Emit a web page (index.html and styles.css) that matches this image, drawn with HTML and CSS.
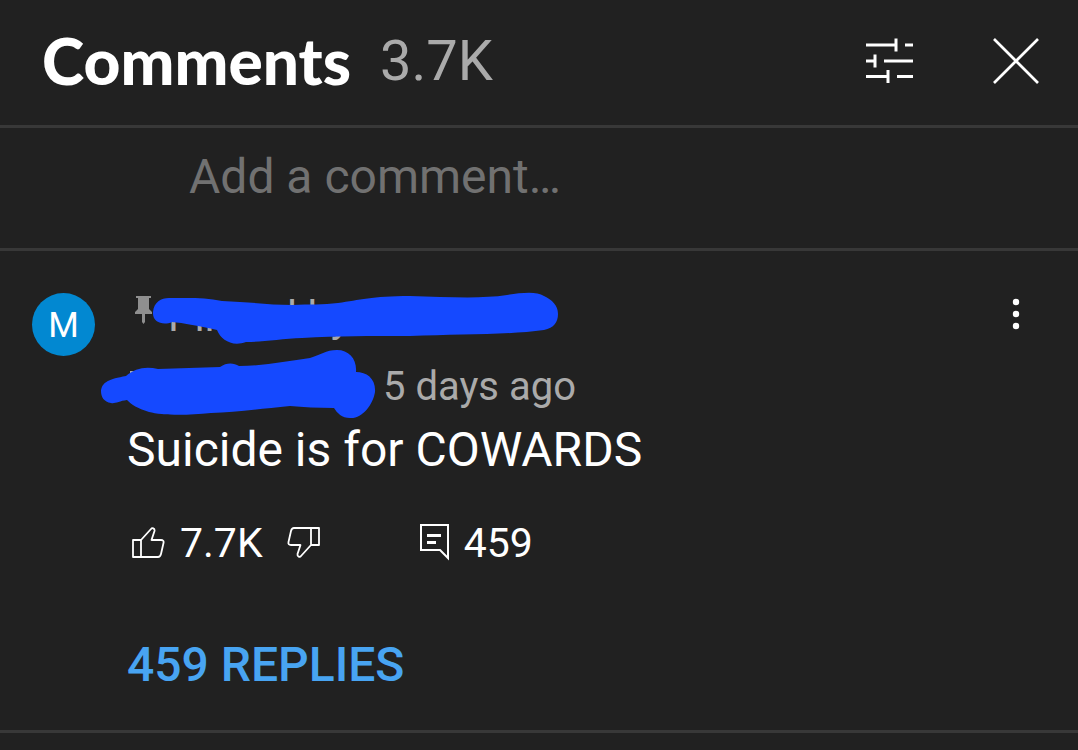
FILE: index.html
```html
<!DOCTYPE html>
<html lang="en">
<head>
	<meta charset="UTF-8">
	<title>Comments</title>
	<link rel="stylesheet" href="styles.css">
</head>
<body>
	<div class="header">
		<h1 class="title">Comments</h1>
		<span class="total">3.7K</span>
		<button class="icon-btn sort" type="button" aria-label="Sort comments">
			<svg width="48" height="46" viewBox="0 0 48 46" fill="none" stroke="#fff" stroke-width="3">
				<path d="M0 7H30M30 0.500V13.500M39 7H47M0 23H9M9 16.500V29.500M18 23H47M0 38.500H22M22 32V45M31 38.500H47"/>
			</svg>
		</button>
		<button class="icon-btn" type="button" aria-label="Close">
			<svg width="46" height="46" viewBox="0 0 46 46" fill="none" stroke="#fff" stroke-width="2.700">
				<path d="M1 1L45 45M45 1L1 45"/>
			</svg>
		</button>
	</div>

	<div class="add">
		<input class="add-input" type="text" placeholder="Add a comment…" aria-label="Add a comment">
	</div>

	<div class="comment">
		<div class="avatar">M</div>
		<div class="content">
			<div class="pinned">
				<svg width="17" height="28" viewBox="0 0 17 28" fill="#8f8f8f">
					<path d="M1 0H16V2H14V13L17 16V18H10V26L8.500 28L7 26V18H0V16L3 13V2H1Z"/>
				</svg>
				<span>Pinned by</span>
			</div>
			<div class="time">5 days ago</div>
			<p class="text">Suicide is for COWARDS</p>
			<div class="actions">
				<button class="action like" type="button" aria-label="Like">
					<svg width="33" height="33" viewBox="0 0 33 33" fill="none" stroke="#fff" stroke-width="1.800" stroke-linejoin="round">
						<path d="M1 13H9V30H1ZM9 13L19 2C20 0.500 23 1 22.500 4L19.500 13H29C31 13 32 14 31.500 16L29 27C28.500 29 27.500 30 26 30H9"/>
					</svg>
					<span>7.7K</span>
				</button>
				<button class="action dislike" type="button" aria-label="Dislike">
					<svg width="33" height="33" viewBox="0 0 33 33" fill="none" stroke="#fff" stroke-width="1.800" stroke-linejoin="round">
						<path d="M32 18H24V1H32ZM24 18L14 29C13 30.500 10 30 10.500 27L13.500 18H4C2 18 1 17 1.500 15L4 4C4.500 2 5.500 1 7 1H24"/>
					</svg>
				</button>
				<button class="action" type="button" aria-label="Reply">
					<svg width="29" height="38" viewBox="0 0 29 38" fill="none" stroke="#fff">
						<path d="M1 1H28V34L20 26H1Z" stroke-width="2"/>
						<path d="M7 11.500H21M7 18.500H16" stroke-width="3"/>
					</svg>
					<span>459</span>
				</button>
			</div>
			<a class="replies" href="#">459 REPLIES</a>

			<!-- marker strokes over the names -->
			<svg class="marker" width="460" height="130" viewBox="100 290 460 130" fill="#1549ff">
				<path d="M130 371H134V374H130Z" fill="#aaa"/>
				<path d="M153 312C154 302 161 298 169 298C187 298 204 297 222 301C250 302 270 305 292 305C310 304 323 305 338 303C360 300 371 296 410 296C448 297 481 299 507 295C521 293 536 291 544 296C552 300 558 305 558 314C558 322 554 328 544 330C507 335 460 334 410 336C368 336 339 336 302 338C281 339 260 342 246 342C232 347 221 340 217 330C200 326 183 323 172 322C163 326 152 322 153 312Z"/>
				<path d="M101 391C102 382 109 379 126 376C135 368 146 366 158 369L220 367C227 362 234 363 239 366C263 366 288 361 310 358C320 355 326 350 337 350C349 350 357 359 356 372C367 372 376 379 375 392C373 405 362 419 350 418C342 418 337 413 334 408C318 408 303 407 290 406C259 409 235 412 211 413C183 416 161 415 149 412C137 408 132 405 127 400C119 401 115 404 111 403C104 402 101 397 101 391Z"/>
			</svg>
		</div>
		<button class="icon-btn more" type="button" aria-label="More">
			<svg width="8" height="32" viewBox="0 0 8 32" fill="#fff">
				<circle cx="4" cy="4" r="3.200"/>
				<circle cx="4" cy="16" r="3.200"/>
				<circle cx="4" cy="28" r="3.200"/>
			</svg>
		</button>
	</div>
</body>
</html>
```
FILE: styles.css
```css
* {
	box-sizing: border-box;
}

body {
	margin: 0;
	background-color: #212121;
	color: #ffffff;
	font-family: Roboto, "Liberation Sans", sans-serif;
}

button {
	border: none;
	padding: 0;
	background: none;
	color: inherit;
	font: inherit;
	cursor: pointer;
}

svg {
	display: block;
	flex: none;
}

.header {
	display: flex;
	align-items: center;
	height: 128px;
	padding: 0 39px 3px 42px;
	border-bottom: 3px solid #383838;
}

.title {
	margin: 0;
	font-family: Lato, sans-serif;
	font-size: 64px;
	font-weight: 900;
	line-height: 72px;
}

.total {
	margin-left: 29px;
	color: #aaaaaa;
	font-size: 56px;
	line-height: 72px;
}

.sort {
	margin-left: auto;
	margin-right: 79px;
}

.add {
	padding: 20px 32px 44px 189px;
	border-bottom: 3px solid #383838;
}

.add-input {
	display: block;
	width: 100%;
	height: 56px;
	border: none;
	outline: none;
	padding: 0;
	background: none;
	color: #ffffff;
	font-family: inherit;
	font-size: 48px;
}

.add-input::placeholder {
	color: #717171;
}

.comment {
	display: flex;
	align-items: flex-start;
	padding: 42px 58px 37px 32px;
	border-bottom: 3px solid #383838;
}

.avatar {
	flex: none;
	width: 63px;
	height: 63px;
	margin-right: 32px;
	border-radius: 50%;
	background-color: #0288d1;
	font-size: 35px;
	font-weight: 400;
	line-height: 65px;
	text-align: center;
}

.content {
	position: relative;
	flex: 1;
}

.pinned {
	display: flex;
	gap: 16px;
	padding: 0 8px;
	color: #aaaaaa;
	font-size: 42px;
	line-height: 48px;
}

.pinned svg {
	margin-top: 3px;
}

/* the name in front of the time is covered */
.time {
	margin-top: 21px;
	padding-left: 256px;
	color: #aaaaaa;
	font-size: 40px;
	line-height: 50px;
}

.text {
	margin: 10px 0 41px;
	font-size: 48px;
	line-height: 56px;
}

.actions {
	display: flex;
	padding-left: 5px;
	font-size: 41px;
	line-height: 48px;
}

.action {
	display: flex;
	align-items: center;
	gap: 15px;
}

.dislike {
	margin: 0 100px 0 24px;
}

.replies {
	display: inline-block;
	margin-top: 70px;
	color: #48a4f2;
	font-size: 48px;
	font-weight: 500;
	line-height: 56px;
	text-decoration: none;
	vertical-align: top;
}

.marker {
	position: absolute;
	top: -3px;
	left: -27px;
}

.more {
	margin-top: 5px;
}
```
